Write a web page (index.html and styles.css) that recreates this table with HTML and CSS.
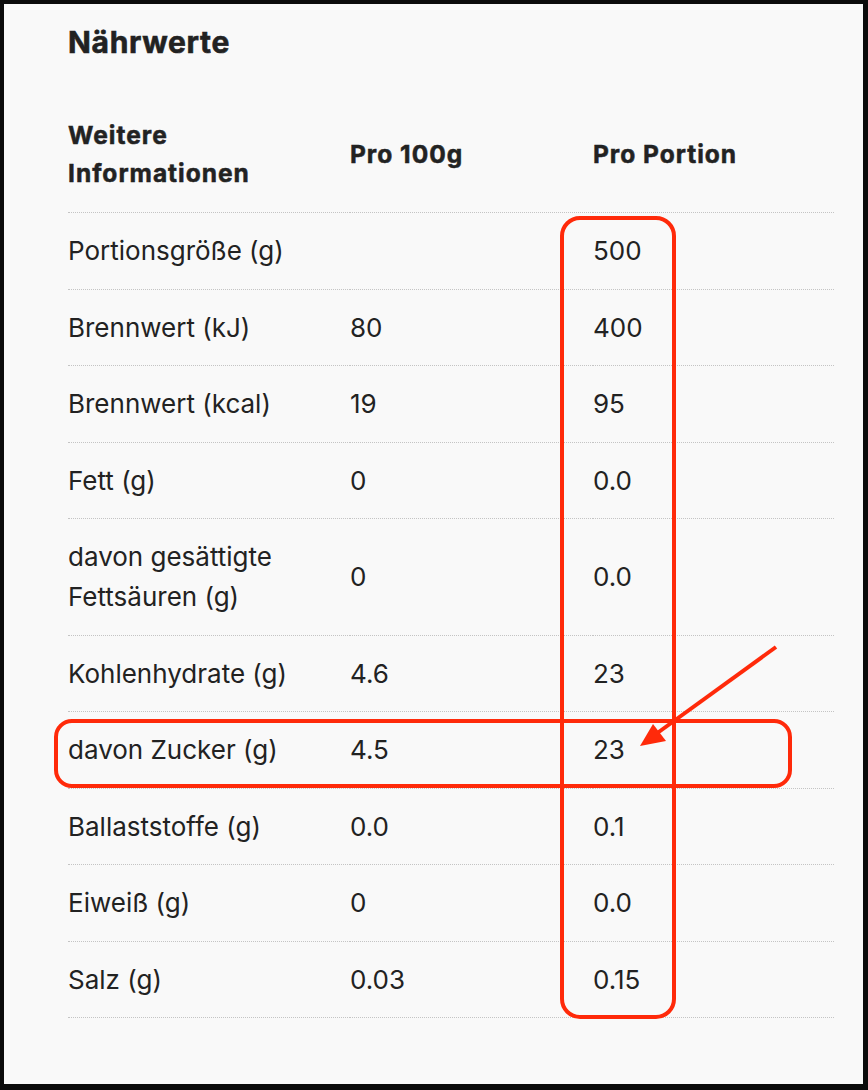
FILE: index.html
```html
<!DOCTYPE html>
<html lang="de">
<head>
<meta charset="utf-8">
<title>Nährwerte</title>
<link rel="stylesheet" href="styles.css">
</head>
<body>
<div class="frame">
  <h2 class="title">Nährwerte</h2>
  <table class="nutri">
    <colgroup>
      <col class="c1"><col class="c2"><col class="c3">
    </colgroup>
    <thead>
      <tr><th>Weitere<br>Informationen</th><th>Pro 100g</th><th>Pro Portion</th></tr>
    </thead>
    <tbody>
      <tr><td>Portionsgröße (g)</td><td></td><td>500</td></tr>
      <tr><td>Brennwert (kJ)</td><td>80</td><td>400</td></tr>
      <tr><td>Brennwert (kcal)</td><td>19</td><td>95</td></tr>
      <tr><td>Fett (g)</td><td>0</td><td>0.0</td></tr>
      <tr><td>davon gesättigte<br>Fettsäuren (g)</td><td>0</td><td>0.0</td></tr>
      <tr><td>Kohlenhydrate (g)</td><td>4.6</td><td>23</td></tr>
      <tr><td>davon Zucker (g)</td><td>4.5</td><td>23</td></tr>
      <tr><td>Ballaststoffe (g)</td><td>0.0</td><td>0.1</td></tr>
      <tr><td>Eiweiß (g)</td><td>0</td><td>0.0</td></tr>
      <tr><td>Salz (g)</td><td>0.03</td><td>0.15</td></tr>
    </tbody>
  </table>
</div>
<svg class="marks" width="868" height="1090" viewBox="0 0 868 1090">
  <rect x="562" y="218" width="112" height="799" rx="18" ry="18" fill="none" stroke="#ff2a0a" stroke-width="4"/>
  <rect x="56" y="721" width="734" height="65" rx="16" ry="16" fill="none" stroke="#ff2a0a" stroke-width="4"/>
  <line x1="776" y1="647" x2="656" y2="734" stroke="#ff2a0a" stroke-width="4"/>
  <polygon points="640,746 653,724 666,741" fill="#ff2a0a"/>
</svg>
</body>
</html>
```
FILE: styles.css
```css
html, body {
  margin: 0;
  padding: 0;
}
body {
  position: relative;
  width: 868px;
  height: 1090px;
  background: #ffffff;
  font-family: Inter, "Liberation Sans", sans-serif;
  color: #222222;
}
.frame {
  box-sizing: border-box;
  width: 868px;
  height: 1090px;
  border-style: solid;
  border-color: #0b0b0b;
  border-width: 4px 5px 6px 4px;
  background: #f9f9f9;
  padding: 22px 0 0 64px;
}
.title {
  margin: 0;
  font-size: 30px;
  line-height: 32px;
  font-weight: 700;
  letter-spacing: 0.7px;
  -webkit-text-stroke: 0.6px #222222;
}
.nutri {
  margin-top: 58px;
  border-collapse: collapse;
  width: 766px;
  table-layout: fixed;
}
.c1 { width: 282px; }
.c2 { width: 243px; }
.c3 { width: 241px; }
.nutri th {
  text-align: left;
  font-size: 24.5px;
  line-height: 38px;
  font-weight: 700;
  letter-spacing: 1px;
  -webkit-text-stroke: 0.5px #222222;
  padding: 0 0 20px 0;
  vertical-align: middle;
  border-bottom: 1px dotted #c4c4c4;
}
.nutri td {
  font-size: 26px;
  line-height: 40px;
  font-weight: 400;
  padding: 18px 0 17.5px 0;
  vertical-align: middle;
  border-bottom: 1px dotted #c4c4c4;
}
.marks {
  position: absolute;
  left: 0;
  top: 0;
  pointer-events: none;
}
```
